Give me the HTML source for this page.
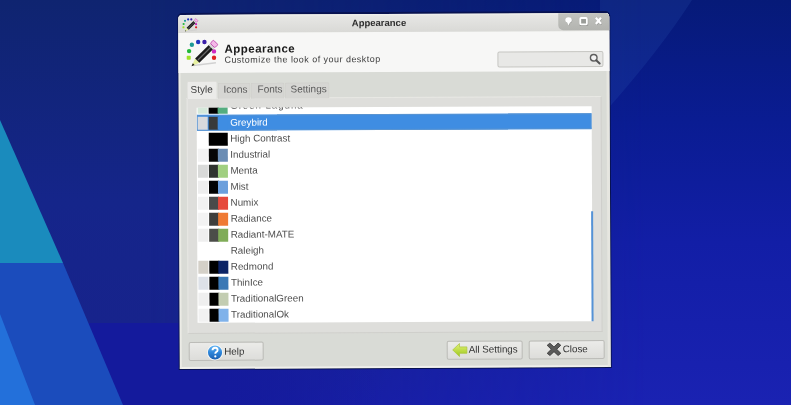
<!DOCTYPE html>
<html><head><meta charset="utf-8">
<style>
*{margin:0;padding:0;box-sizing:border-box}
html,body{width:791px;height:405px;overflow:hidden;background:#13237a}
body{position:relative;font-family:"Liberation Sans",sans-serif;filter:blur(0.35px)}
div,span,svg{position:absolute}
#bg{left:0;top:0}
#wb{left:178px;top:12px;width:433px;height:357px;background:#081250;border-radius:5px 5px 0 0}
#wc{left:179px;top:14px;width:431px;height:354px;border-radius:4px 4px 0 0;background:#d9dbd6;box-shadow:inset 2px 0 0 #ecece6,inset -3px 0 0 #e6e6e0,inset 0 -2px 0 #f0f0ec}
#title{left:179px;top:14px;width:431px;height:18px;border-radius:4px 4px 0 0;background:linear-gradient(#f2f2f0 0,#e6e6e4 2px,#d9d9d6 100%)}
#ttext{left:352.5px;top:17px;font-weight:bold;font-size:9.5px;line-height:11px;color:#2e2e2e}
#tbtns{left:559px;top:14px;width:51px;height:17px;background:linear-gradient(#c2c3bf,#b3b4b0);border-radius:0 4px 0 5px}
#hdr{left:179px;top:32px;width:431px;height:40px;background:#f7f7f6}
.h1{left:225px;top:42px;font-size:11.5px;line-height:13px;font-weight:bold;color:#1a1a1a;letter-spacing:0.5px}
.h2{left:225px;top:53.5px;font-size:9px;line-height:11px;color:#3c3c3c;letter-spacing:0.46px}
#search{left:498px;top:52px;width:106px;height:15.5px;background:#e8e8e6;border:1px solid #c6c6c2;border-radius:2px}
.tab{top:82px;height:16px;background:#d6d6d3;border:1px solid #d0d0cc;border-bottom:none;border-radius:2px 2px 0 0}
.tab span{top:0px;font-size:10px;line-height:11px;color:#5a5a5a;white-space:nowrap}
#frame{left:187px;top:97px;width:415px;height:235.5px;background:#dededb;border:1px solid #e8e8e4;border-right-color:#cfcfcb;border-bottom-color:#cfcfcb}
#list{left:197px;top:107px;width:395px;height:215px;background:#fff;overflow:hidden}
.row{left:0;width:395px;height:16px;font-size:9.8px;line-height:16px;color:#4e4e4e}
.row span{left:33.5px;top:0;white-space:nowrap}
.sw{top:2px;height:13px}
.s1{left:1px;width:10px}.s2{left:12px;width:10px}.s3{left:21px;width:10px}
.sel{background:#3f8de2;box-shadow:inset 0 0 0 1px #5a94d0;color:#fff}
.sel .s1{left:1px}
.btn{top:340.5px;height:19.5px;background:linear-gradient(#ebebe9,#dddddA);border:1px solid #bcbcb8;border-radius:2px}
.btn span{top:2px;font-size:9.8px;line-height:11px;color:#333;white-space:nowrap}
</style></head><body>
<svg id="bg" width="791" height="405" viewBox="0 0 791 405">
<defs>
<linearGradient id="gL" x1="0" y1="0" x2="0" y2="1">
<stop offset="0" stop-color="#0f2470"/><stop offset="0.5" stop-color="#15258a"/><stop offset="0.8" stop-color="#17238c"/><stop offset="1" stop-color="#161c9c"/>
</linearGradient>
<linearGradient id="gR" x1="0" y1="0" x2="0" y2="1">
<stop offset="0" stop-color="#061a78"/><stop offset="0.3" stop-color="#0a1c92"/><stop offset="0.6" stop-color="#121ea6"/><stop offset="1" stop-color="#1a22b2"/>
</linearGradient>
<linearGradient id="gM" gradientUnits="userSpaceOnUse" x1="150" y1="0" x2="650" y2="0">
<stop offset="0" stop-color="#fff" stop-opacity="0"/><stop offset="1" stop-color="#fff" stop-opacity="1"/>
</linearGradient>
<mask id="mR"><rect width="791" height="405" fill="url(#gM)"/></mask>
<linearGradient id="g3" gradientUnits="userSpaceOnUse" x1="150" y1="0" x2="380" y2="0"><stop offset="0" stop-color="#141a9c"/><stop offset="0.3" stop-color="#141a9c"/><stop offset="1" stop-color="#141a9c" stop-opacity="0"/></linearGradient>
</defs>
<rect width="791" height="405" fill="url(#gL)"/>
<rect width="791" height="405" fill="url(#gR)" mask="url(#mR)"/>
<path d="M600,0 L692,0 Q660,50 605,112 L600,118 Z" fill="#3a6ac0" opacity="0.16"/>
<polygon points="88,323 380,323 380,405 123,405" fill="url(#g3)"/>
<polygon points="0,120 63,263 0,263" fill="#1a8bbd"/>
<polygon points="0,263 63,263 123,405 0,405" fill="#1b4cbc"/>
<polygon points="0,314 35,405 0,405" fill="#2370da"/>
</svg>

<div id="W" style="left:0;top:0;width:791px;height:405px;transform:rotate(-0.25deg);transform-origin:395px 190px">
<div id="wb"></div>
<div id="wc"></div>
<div id="title"></div>
<div id="ttext">Appearance</div>
<div id="tbtns"></div>
<div id="hdr"></div>

<svg style="left:184.8px;top:36.3px" width="36" height="32" viewBox="0 0 36 32"><g>
<rect x="2.3" y="18.9" width="4" height="4" rx="0.8" fill="#9fe22a"/>
<circle cx="4.7" cy="14.2" r="2.2" fill="#22b83a"/>
<circle cx="7.5" cy="7.9" r="2.2" fill="#1c9a96"/>
<circle cx="13.8" cy="5.1" r="2.2" fill="#2036c0"/>
<circle cx="20.1" cy="5.1" r="2.2" fill="#3a1ea8"/>
<circle cx="29.6" cy="14.6" r="2.2" fill="#d028c0"/>
<circle cx="29.6" cy="20.9" r="2.2" fill="#e02020"/>
<path d="M9 28.6 L31.5 26" stroke="#c8c8c8" stroke-width="1.4" opacity="0.8"/>
<g transform="translate(7.1,29.4) rotate(-44.5)">
<polygon points="0,0 8,-3 8,3" fill="#e6f0a0"/>
<polygon points="0,0 3,-1.2 3,1.2" fill="#111"/>
<rect x="8" y="-3" width="20" height="6" fill="#1a1a1a"/>
<rect x="9" y="-0.6" width="18" height="1.2" fill="#6a6a6a"/>
<rect x="27" y="-3" width="2.5" height="6" fill="#d8d8d8"/>
<rect x="29.5" y="-3.2" width="4.5" height="6.4" rx="1" fill="#f4b8e8" stroke="#c050b0" stroke-width="0.9"/>
</g>
</g></svg>
<svg style="left:181.6px;top:15.9px" width="18" height="16" viewBox="0 0 36 32"><g>
<rect x="2.3" y="18.9" width="4" height="4" rx="0.8" fill="#9fe22a"/>
<circle cx="4.7" cy="14.2" r="2.2" fill="#22b83a"/>
<circle cx="7.5" cy="7.9" r="2.2" fill="#1c9a96"/>
<circle cx="13.8" cy="5.1" r="2.2" fill="#2036c0"/>
<circle cx="20.1" cy="5.1" r="2.2" fill="#3a1ea8"/>
<circle cx="29.6" cy="14.6" r="2.2" fill="#d028c0"/>
<circle cx="29.6" cy="20.9" r="2.2" fill="#e02020"/>
<path d="M9 28.6 L31.5 26" stroke="#c8c8c8" stroke-width="1.4" opacity="0.8"/>
<g transform="translate(7.1,29.4) rotate(-44.5)">
<polygon points="0,0 8,-3 8,3" fill="#e6f0a0"/>
<polygon points="0,0 3,-1.2 3,1.2" fill="#111"/>
<rect x="8" y="-3" width="20" height="6" fill="#1a1a1a"/>
<rect x="9" y="-0.6" width="18" height="1.2" fill="#6a6a6a"/>
<rect x="27" y="-3" width="2.5" height="6" fill="#d8d8d8"/>
<rect x="29.5" y="-3.2" width="4.5" height="6.4" rx="1" fill="#f4b8e8" stroke="#c050b0" stroke-width="0.9"/>
</g>
</g></svg>

<div class="h1">Appearance</div>
<div class="h2">Customize the look of your desktop</div>
<div id="search"></div>
<svg style="left:559px;top:14px" width="51" height="17" viewBox="0 0 51 17">
<g opacity="0.35" transform="translate(0.4,0.6)" fill="#555" stroke="#555">
<path d="M10.3 4 Q13.6 4 13.6 7 Q13.6 8.6 11.6 9.4 L10.3 12.2 L9 9.4 Q7 8.6 7 7 Q7 4 10.3 4 Z" stroke="none"/>
<rect x="22" y="4.8" width="6.6" height="6.4" fill="none" stroke-width="1.8"/>
<path d="M37.6 4.6 L42.8 10.8 M42.8 4.6 L37.6 10.8" stroke-width="2.2" fill="none"/>
</g>
<path d="M10.3 4 Q13.6 4 13.6 7 Q13.6 8.6 11.6 9.4 L10.3 12.2 L9 9.4 Q7 8.6 7 7 Q7 4 10.3 4 Z" fill="#fff"/>
<rect x="22" y="4.8" width="6.6" height="6.4" rx="0.8" fill="#9a9c98" stroke="#fff" stroke-width="1.8"/>
<path d="M37.6 4.6 L42.8 10.8 M42.8 4.6 L37.6 10.8" stroke="#fff" stroke-width="2.2" fill="none"/>
</svg>
<svg style="left:587px;top:52.5px" width="16" height="14" viewBox="0 0 16 14">
<circle cx="7.3" cy="5.6" r="3.3" fill="#f2f2f2" stroke="#5e5e5e" stroke-width="1.4"/>
<path d="M9.8 8.1 L13.2 11.4" stroke="#555" stroke-width="2" stroke-linecap="round"/>
</svg>


<div id="frame"></div>
<div class="tab" style="left:186.5px;top:80px;width:31.5px;height:18px;background:#ebebe9;border-color:#dcdcd8"><span style="left:3.5px;top:2px;color:#3e3e3e">Style</span></div>
<div class="tab" style="left:218px;width:33px"><span style="left:5px">Icons</span></div>
<div class="tab" style="left:251px;width:34px"><span style="left:6px">Fonts</span></div>
<div class="tab" style="left:285px;width:45px"><span style="left:5px">Settings</span></div>
<div id="list">
<div class="row" style="top:-9px"><div class="sw s1" style="background:#d5e8da"></div><div class="sw s2" style="background:#000"></div><div class="sw s3" style="background:#55ad80"></div><span style="top:-1.5px;letter-spacing:0.9px">Green Laguna</span></div>
<div class="row sel" style="top:7px"><div class="sw s1" style="background:#d8d9dc"></div><div class="sw s2" style="background:#383a3b"></div><div class="sw s3" style="background:#3f8de2"></div><span>Greybird</span></div>
<div class="row" style="top:23px"><div class="sw s1" style="background:#fff"></div><div class="sw" style="left:12px;width:19px;background:#000"></div><span>High Contrast</span></div>
<div class="row" style="top:39px"><div class="sw s1" style="background:#f3f3f3"></div><div class="sw s2" style="background:#060606"></div><div class="sw s3" style="background:#6b8db4"></div><span>Industrial</span></div>
<div class="row" style="top:55px"><div class="sw s1" style="background:#d9dad9"></div><div class="sw s2" style="background:#2f332f"></div><div class="sw s3" style="background:#a0cf80"></div><span>Menta</span></div>
<div class="row" style="top:71px"><div class="sw s1" style="background:#eeeeee"></div><div class="sw s2" style="background:#020202"></div><div class="sw s3" style="background:#6c9fdc"></div><span>Mist</span></div>
<div class="row" style="top:87px"><div class="sw s1" style="background:#f2f2f2"></div><div class="sw s2" style="background:#4a4a4a"></div><div class="sw s3" style="background:#e6493c"></div><span>Numix</span></div>
<div class="row" style="top:103px"><div class="sw s1" style="background:#f3f3f3"></div><div class="sw s2" style="background:#3e3e3c"></div><div class="sw s3" style="background:#ef7a34"></div><span>Radiance</span></div>
<div class="row" style="top:119px"><div class="sw s1" style="background:#efefef"></div><div class="sw s2" style="background:#4b4d49"></div><div class="sw s3" style="background:#80ac58"></div><span>Radiant-MATE</span></div>
<div class="row" style="top:135px"><span>Raleigh</span></div>
<div class="row" style="top:151px"><div class="sw s1" style="background:#d4d0c8"></div><div class="sw s2" style="background:#000"></div><div class="sw s3" style="background:#0c2466"></div><span>Redmond</span></div>
<div class="row" style="top:167px"><div class="sw s1" style="background:#dde1e8"></div><div class="sw s2" style="background:#000"></div><div class="sw s3" style="background:#3a78b5"></div><span>ThinIce</span></div>
<div class="row" style="top:183px"><div class="sw s1" style="background:#efefef"></div><div class="sw s2" style="background:#000"></div><div class="sw s3" style="background:#c3cdb2"></div><span>TraditionalGreen</span></div>
<div class="row" style="top:199px"><div class="sw s1" style="background:#f1f1f1"></div><div class="sw s2" style="background:#000"></div><div class="sw s3" style="background:#80b2ea"></div><span>TraditionalOk</span></div>
<!--/list--></div>
<div style="left:590.5px;top:212px;width:2.5px;height:110px;background:#5592d6"></div>
<div class="btn" style="left:188px;width:75px"><span style="left:34.5px;top:3px">Help</span></div>
<div class="btn" style="left:446px;width:76px"><span style="left:21px">All Settings</span></div>
<div class="btn" style="left:528px;width:76px"><span style="left:33px">Close</span></div>
<svg style="left:205px;top:342.5px" width="18" height="18" viewBox="0 0 18 18">
<defs><linearGradient id="hg" x1="0" y1="0" x2="0" y2="1"><stop offset="0" stop-color="#6ab8f4"/><stop offset="0.5" stop-color="#2e86da"/><stop offset="1" stop-color="#1a5fb0"/></linearGradient></defs>
<circle cx="9.3" cy="8.7" r="8" fill="#f8f8f6"/>
<circle cx="9.3" cy="8.7" r="7.1" fill="url(#hg)"/>
<path d="M6.8 6.5 Q6.9 3.9 9.4 3.9 Q11.9 3.9 11.9 6.2 Q11.9 7.6 10.4 8.3 Q9.6 8.8 9.6 10" fill="none" stroke="#fff" stroke-width="1.9"/>
<circle cx="9.6" cy="12.6" r="1.1" fill="#fff"/>
</svg>
<svg style="left:451px;top:343px" width="17" height="15" viewBox="0 0 17 15">
<defs><linearGradient id="ag" x1="0" y1="0" x2="0" y2="1"><stop offset="0" stop-color="#e4f27a"/><stop offset="1" stop-color="#9cc81a"/></linearGradient></defs>
<path d="M1 7.2 L7.8 0.8 L7.8 4.2 L15.2 4.2 L15.2 10.6 L7.8 10.6 L7.8 13.8 Z" fill="url(#ag)" stroke="#a8c43a" stroke-width="0.7"/>
</svg>
<svg style="left:545px;top:343px" width="17" height="14" viewBox="0 0 17 14">
<path d="M1.5 3 L4.2 0.8 L8.3 4.6 L12.4 0.8 L15.1 3 L11 7 L15.1 11 L12.4 13.2 L8.3 9.4 L4.2 13.2 L1.5 11 L5.6 7 Z" fill="#5a5a5a" stroke="#333" stroke-width="0.8"/>
</svg>
</div>
</body></html>
